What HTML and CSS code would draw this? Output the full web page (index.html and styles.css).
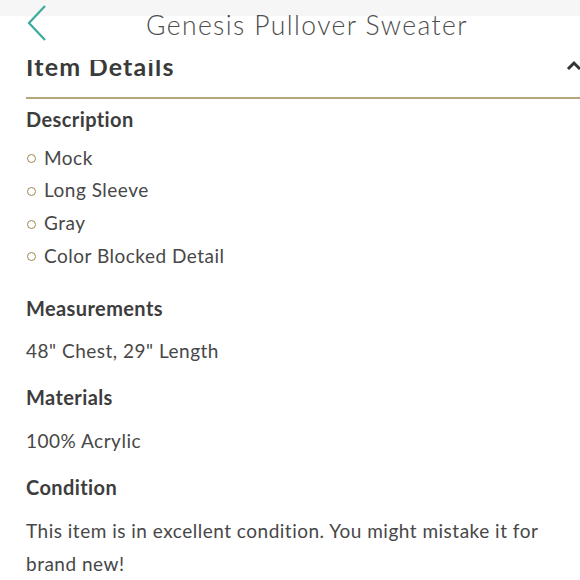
FILE: index.html
```html
<!DOCTYPE html>
<html>
<head>
<meta charset="utf-8">
<link rel="stylesheet" href="styles.css">
</head>
<body>
<header class="header">
  <svg class="back" width="22" height="38" viewBox="0 0 22 38"><path d="M19 2 L3 19 L19 36" fill="none" stroke="#3aab9c" stroke-width="2.2"/></svg>
  <h1 class="title">Genesis Pullover Sweater</h1>
</header>
<main class="content">
  <div class="section-head">
    <h2 class="section-title">Item Details</h2>
    <svg class="caret" width="16" height="11" viewBox="0 0 16 11"><path d="M2 9 L8 3 L14 9" fill="none" stroke="#333" stroke-width="3"/></svg>
  </div>
  <div class="details">
    <h3 class="label label-first">Description</h3>
    <ul class="list">
      <li class="item">Mock</li>
      <li class="item">Long Sleeve</li>
      <li class="item">Gray</li>
      <li class="item">Color Blocked Detail</li>
    </ul>
    <h3 class="label">Measurements</h3>
    <p class="text">48" Chest, 29" Length</p>
    <h3 class="label">Materials</h3>
    <p class="text">100% Acrylic</p>
    <h3 class="label">Condition</h3>
    <p class="text para">This item is in excellent condition. You might mistake it for brand new!</p>
  </div>
</main>
</body>
</html>
```
FILE: styles.css
```css
html, body {
  margin: 0;
  padding: 0;
  background: #fff;
  overflow: hidden;
}
body {
  width: 580px;
  height: 580px;
  font-family: Lato, "Open Sans", sans-serif;
  color: #474747;
}
.header {
  position: relative;
  z-index: 1;
  height: 60px;
  display: flex;
  align-items: flex-start;
  background: linear-gradient(#f6f6f6 0, #f6f6f6 16px, #fff 16px, #fff 100%);
}
.back {
  margin: 4px 0 0 26px;
  flex: none;
}
.title {
  margin: 7px 0 0 98px;
  font-size: 26.5px;
  font-weight: 300;
  line-height: 36px;
  color: #4d4d4d;
  letter-spacing: 1.4px;
}
.content {
  padding-left: 26px;
}
.section-head {
  display: flex;
  align-items: flex-start;
  justify-content: space-between;
  height: 47px;
  border-bottom: 2px solid #b3a67a;
  margin-top: -10px;
}
.section-title {
  margin: 1px 0 0;
  font-size: 25px;
  font-weight: 700;
  line-height: 30px;
  letter-spacing: 1.2px;
  color: #3a3a3a;
}
.caret {
  margin: 10px -2px 0 0;
}
.details {
  padding-top: 6px;
}
.label {
  margin: 0 0 13.5px;
  font-size: 20px;
  font-weight: 700;
  line-height: 28px;
  letter-spacing: 0.4px;
  color: #3d3d3d;
}
.label-first {
  margin-bottom: 8.5px;
}
.list {
  list-style: none;
  margin: 0 0 21.5px;
  padding: 0;
}
.item {
  display: flex;
  align-items: center;
  gap: 8px;
  font-size: 19px;
  line-height: 32.7px;
  letter-spacing: 0.5px;
  margin-left: 1px;
}
.item::before {
  content: "";
  width: 7px;
  height: 7px;
  margin-top: 2px;
  border: 1.8px solid #9c8752;
  border-radius: 50%;
  flex: none;
}
.text {
  margin: 0 0 16px;
  font-size: 19px;
  line-height: 32px;
  letter-spacing: 0.5px;
}
.para {
  line-height: 33px;
  padding-right: 30px;
}
```
